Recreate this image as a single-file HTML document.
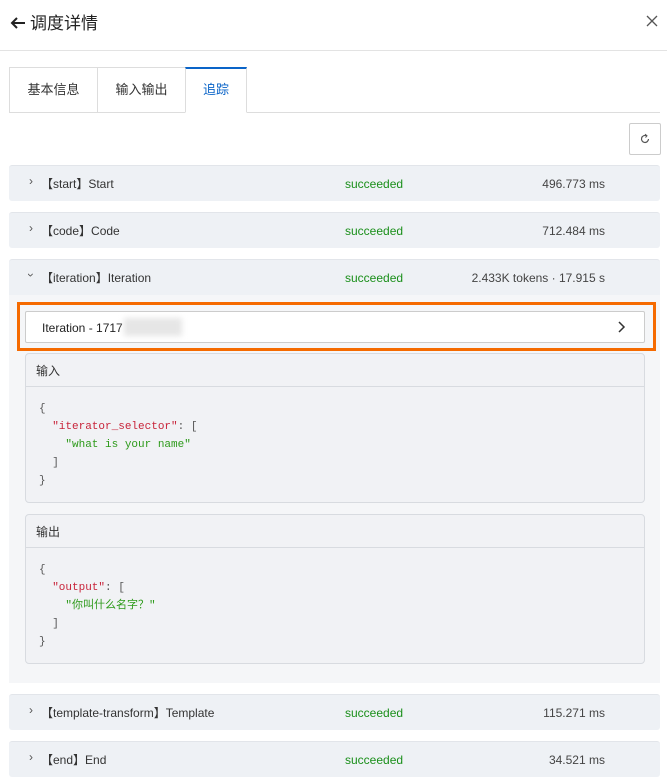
<!DOCTYPE html>
<html><head><meta charset="utf-8"><style>
*{box-sizing:border-box;margin:0;padding:0}
body{width:667px;height:783px;background:#fff;font-family:"Liberation Sans","Noto Sans CJK SC",sans-serif;color:#333;position:relative;overflow:hidden;font-size:12px}
.abs{position:absolute}
.hdr{left:0;top:0;width:667px;height:51px;border-bottom:1px solid #e3e3e3}
.title{left:30px;top:9px;font-size:17px;color:#222}
.tab{top:67px;height:46px;border:1px solid #ddd;line-height:44px;text-align:center;font-size:13px;color:#333;background:#fff}
.row{left:9px;width:651px;height:36px;background:#eef1f5;border-radius:3px;border-top:1px solid #e2e5ea}
.row span{position:absolute;top:11px;font-size:12px;line-height:14px}
.chev{left:20px;color:#555;top:8px!important}
.nm{left:32px;color:#333;top:11px!important}
.st{left:336px;color:#1a8f1a}
.tm{right:55px;color:#444}
.panel{left:9px;top:295px;width:651px;height:388px;background:#f5f6f8}
.card{left:25px;width:620px;height:150px;border:1px solid #d8dbe0;border-radius:4px;background:#f1f2f5}
.card .ch{height:33px;border-bottom:1px solid #d8dbe0;padding:8px 10px;font-size:12px}
.code{font-family:"Liberation Mono","Noto Sans CJK SC",monospace;font-size:11px;line-height:18px;padding:13px 13px;color:#555}
.k{color:#c8243a}.s{color:#2d9a1a}
</style></head><body>
<div class="abs hdr"></div>
<svg class="abs" style="left:9px;top:15px" width="18" height="16"><path d="M16 8H3M8 3L3 8L8 13" fill="none" stroke="#222" stroke-width="2"/></svg>
<div class="abs title">调度详情</div>
<svg class="abs" style="left:645px;top:14px" width="14" height="14"><path d="M2 2L12 12M12 2L2 12" stroke="#555" stroke-width="1.3"/></svg>
<div class="abs" style="left:9px;top:112px;width:651px;height:1px;background:#ddd"></div>
<div class="abs tab" style="left:9px;width:89px">基本信息</div>
<div class="abs tab" style="left:97px;width:89px">输入输出</div>
<div class="abs tab" style="left:185px;width:62px;border-top:2px solid #0a64c8;border-bottom-color:#fff;color:#0a64c8;line-height:42px">追踪</div>
<div class="abs" style="left:629px;top:123px;width:32px;height:32px;border:1px solid #ccc;border-radius:2px"></div>
<svg class="abs" style="left:639px;top:133px" width="12" height="12"><path d="M9.5 6A3.5 3.5 0 1 1 7.5 2.8" fill="none" stroke="#555" stroke-width="1.2"/><path d="M6 1.2L8 2.8L6.5 4.6" fill="none" stroke="#555" stroke-width="1"/></svg>

<div class="abs row" style="top:165px"><span class="chev">›</span><span class="nm">【start】Start</span><span class="st">succeeded</span><span class="tm">496.773 ms</span></div>
<div class="abs row" style="top:212px"><span class="chev">›</span><span class="nm">【code】Code</span><span class="st">succeeded</span><span class="tm">712.484 ms</span></div>
<div class="abs row" style="top:259px;border-radius:3px 3px 0 0"><span class="chev" style="transform:rotate(90deg)">›</span><span class="nm">【iteration】Iteration</span><span class="st">succeeded</span><span class="tm">2.433K tokens · 17.915 s</span></div>
<div class="abs panel"></div>
<div class="abs" style="left:17px;top:302px;width:639px;height:49px;border:3px solid #f56a00"></div>
<div class="abs" style="left:25px;top:311px;width:620px;height:32px;background:#fff;border:1px solid #ccc;border-radius:2px"></div>
<div class="abs" style="left:42px;top:321px;font-size:12px;color:#222">Iteration - 1717</div>
<div class="abs" style="left:124px;top:318px;width:58px;height:18px;background:#e6e6e6;filter:blur(3px)"></div>
<svg class="abs" style="left:617px;top:320px" width="10" height="14"><path d="M2 2L7 7L2 12" fill="none" stroke="#333" stroke-width="1.5"/></svg>

<div class="abs card" style="top:353px"><div class="ch">输入</div>
<div class="code">{<br>&nbsp;&nbsp;<span class="k">"iterator_selector"</span>: [<br>&nbsp;&nbsp;&nbsp;&nbsp;<span class="s">"what is your name"</span><br>&nbsp;&nbsp;]<br>}</div></div>
<div class="abs card" style="top:514px"><div class="ch">输出</div>
<div class="code">{<br>&nbsp;&nbsp;<span class="k">"output"</span>: [<br>&nbsp;&nbsp;&nbsp;&nbsp;<span class="s">"你叫什么名字？"</span><br>&nbsp;&nbsp;]<br>}</div></div>

<div class="abs row" style="top:694px"><span class="chev">›</span><span class="nm">【template-transform】Template</span><span class="st">succeeded</span><span class="tm">115.271 ms</span></div>
<div class="abs row" style="top:741px"><span class="chev">›</span><span class="nm">【end】End</span><span class="st">succeeded</span><span class="tm">34.521 ms</span></div>
</body></html>
